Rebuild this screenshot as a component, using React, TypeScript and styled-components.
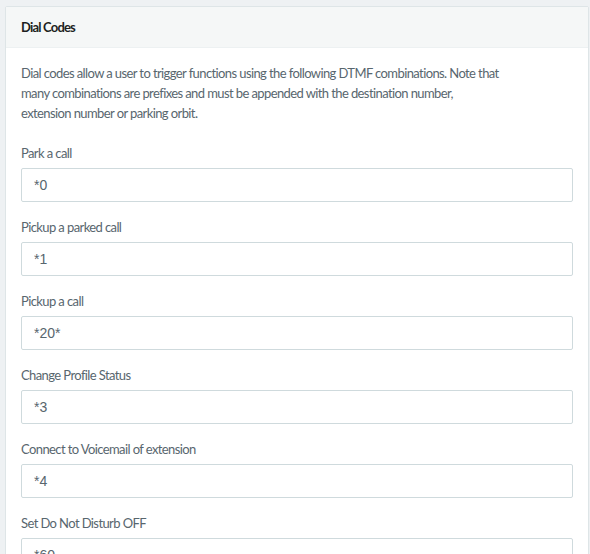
import React from 'react';
import styled, { createGlobalStyle } from 'styled-components';

const GlobalStyle = createGlobalStyle`
    html, body {
        margin: 0;
        padding: 0;
        background: #eef1f3;
    }
    body {
        font-family: 'Source Sans Pro', Lato, 'Liberation Sans', sans-serif;
        font-size: 13px;
        letter-spacing: -0.6px;
        color: #58666e;
    }
`;

const codes = [
    { label: 'Park a call', value: '*0' },
    { label: 'Pickup a parked call', value: '*1' },
    { label: 'Pickup a call', value: '*20*' },
    { label: 'Change Profile Status', value: '*3' },
    { label: 'Connect to Voicemail of extension', value: '*4' },
    { label: 'Set Do Not Disturb OFF', value: '*60' },
];

const App = () => {
    return (
        <Page>
            <GlobalStyle />
            <Panel>
                <PanelHeading>Dial Codes</PanelHeading>
                <PanelBody>
                    <Intro>
                        Dial codes allow a user to trigger functions using the following DTMF combinations. Note that
                        many combinations are prefixes and must be appended with the destination number,
                        extension number or parking orbit.
                    </Intro>
                    {codes.map((c) => (
                        <FormGroup key={c.label}>
                            <Label>{c.label}</Label>
                            <Input type="text" defaultValue={c.value} readOnly />
                        </FormGroup>
                    ))}
                </PanelBody>
            </Panel>
        </Page>
    );
};

export default App;

const Page = styled.div`
    height: 554px;
    overflow: hidden;
    padding: 6px 1px 0 5px;
    box-sizing: border-box;
`;

const Panel = styled.div`
    background: #fff;
    border: 1px solid #dee5e7;
    border-radius: 2px;
`;

const PanelHeading = styled.div`
    background: #f5f7f7;
    border-bottom: 1px solid #edf1f2;
    padding: 10px 15px;
    height: 20px;
    line-height: 20px;
    font-weight: 700;
    letter-spacing: -0.8px;
    color: #1d1f21;
`;

const PanelBody = styled.div`
    padding: 15px;
`;

const Intro = styled.p`
    margin: 0 0 20px;
    line-height: 20px;
    max-width: 482px;
`;

const FormGroup = styled.div`
    margin-bottom: 15px;
`;

const Label = styled.label`
    display: block;
    line-height: 20px;
    margin-bottom: 5px;
`;

const Input = styled.input`
    display: block;
    width: 100%;
    box-sizing: border-box;
    height: 34px;
    padding: 6px 12px;
    border: 1px solid #cfdadd;
    border-radius: 2px;
    background: #fff;
    font-family: 'Liberation Sans', Arial, sans-serif;
    font-size: 14px;
    letter-spacing: 0;
    color: #58666e;
    outline: none;
`;
